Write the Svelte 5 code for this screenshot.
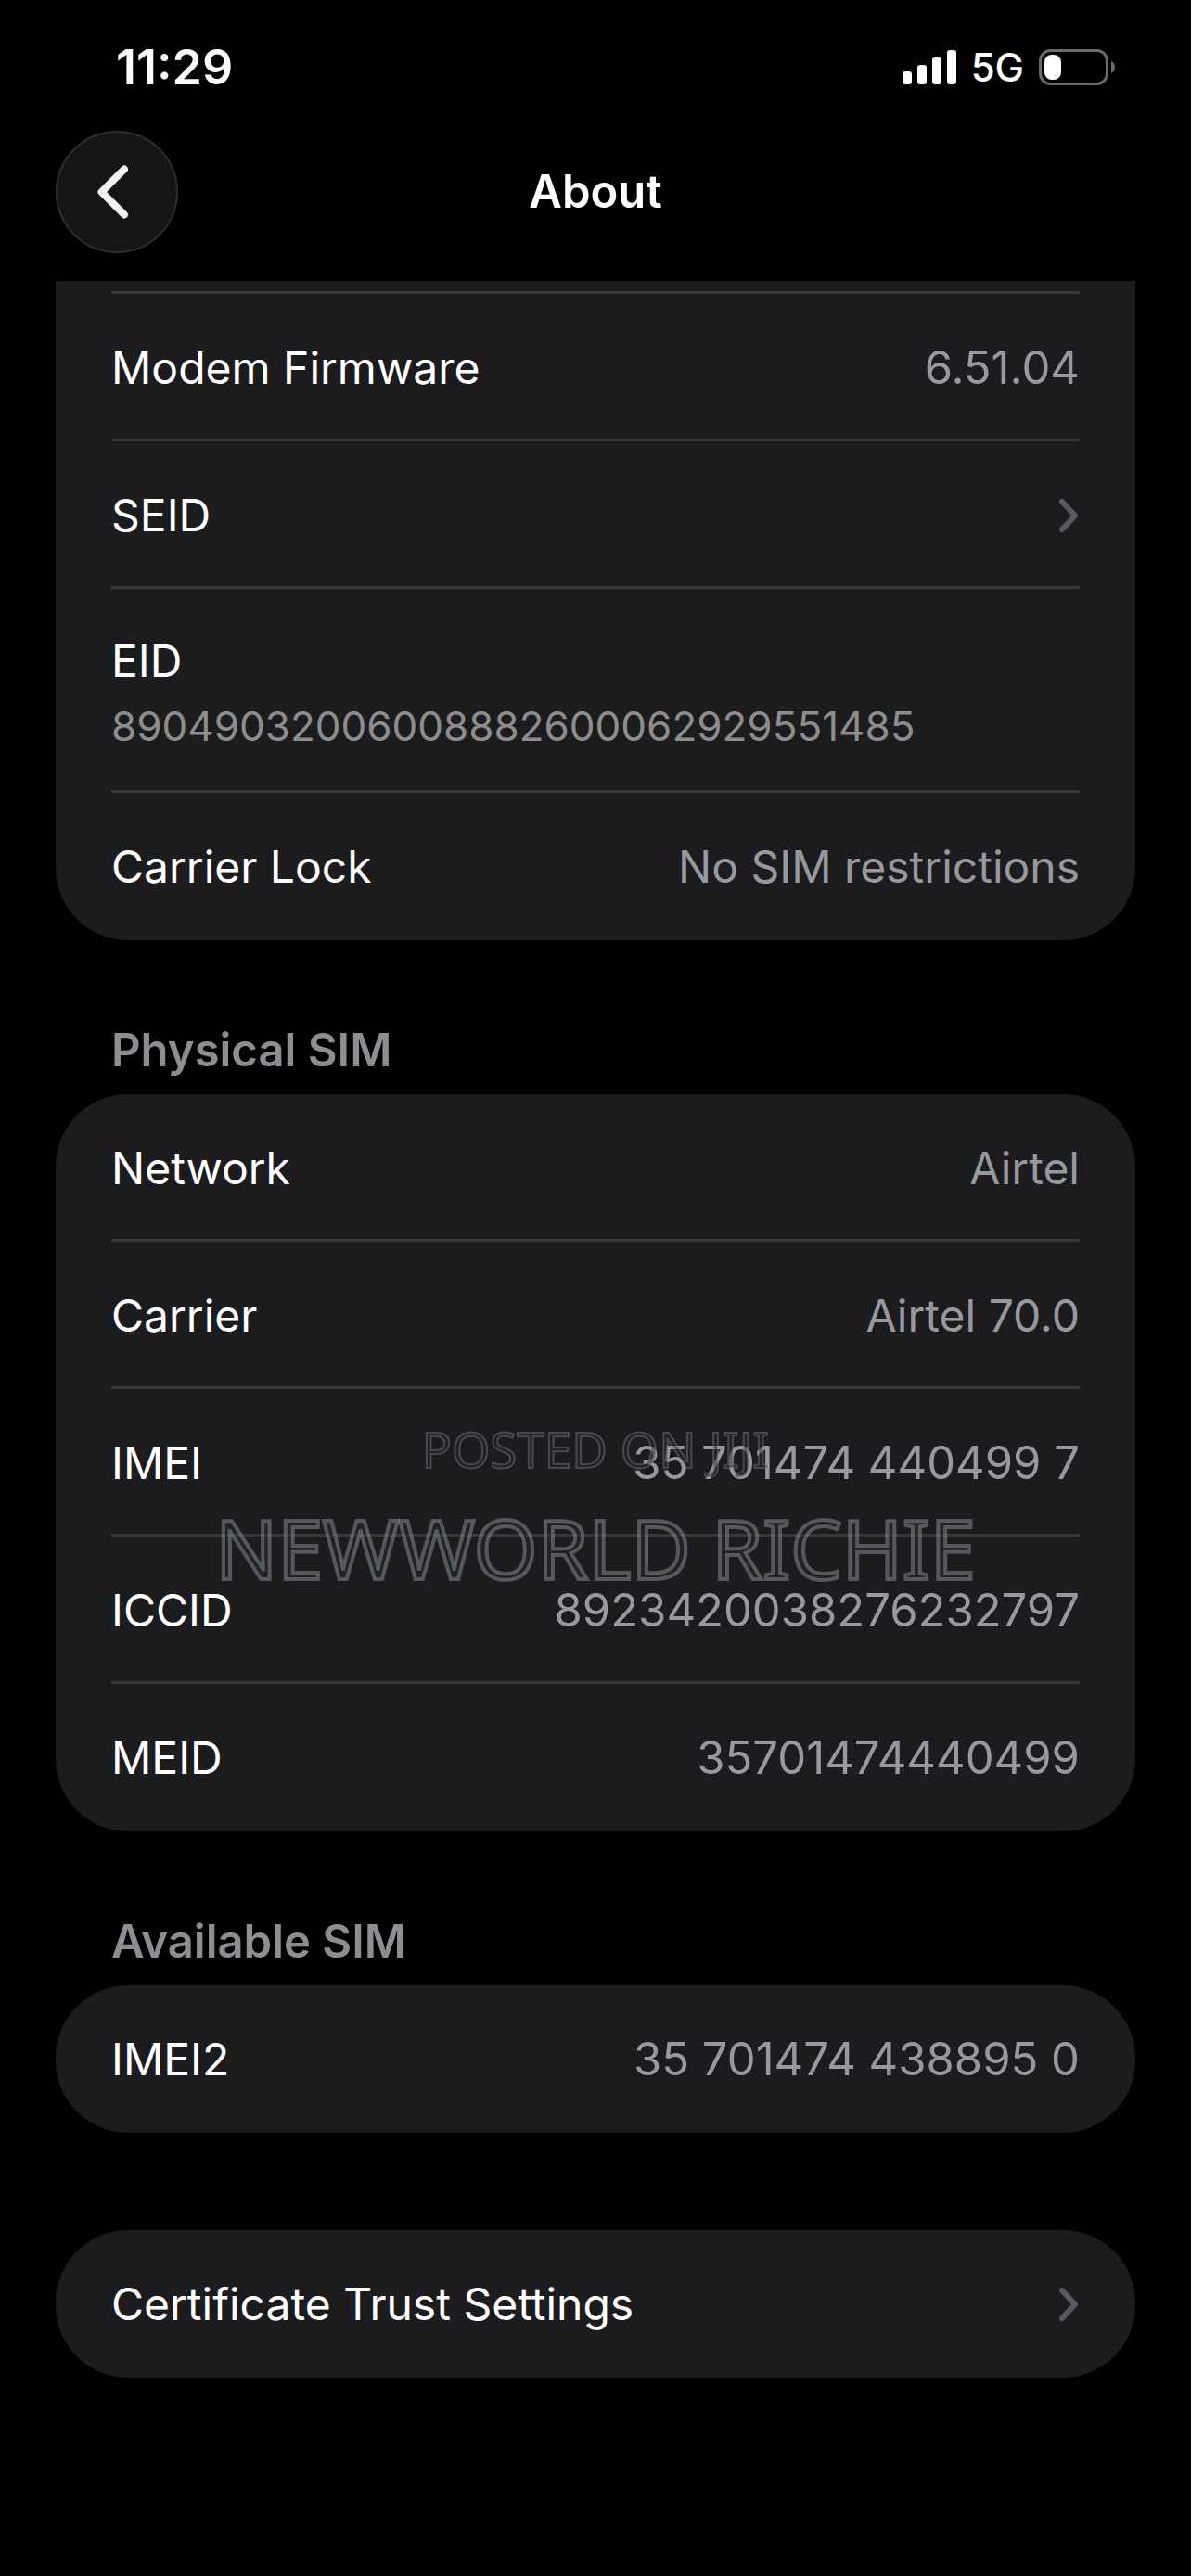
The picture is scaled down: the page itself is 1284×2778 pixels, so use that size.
<script>
  const deviceRows = [
    { label: "Modem Firmware", value: "6.51.04" },
    { label: "SEID", link: true },
    { label: "EID", value: "89049032006008882600062929551485", stacked: true },
    { label: "Carrier Lock", value: "No SIM restrictions" }
  ];

  const physicalRows = [
    { label: "Network", value: "Airtel" },
    { label: "Carrier", value: "Airtel 70.0" },
    { label: "IMEI", value: "35 701474 440499 7" },
    { label: "ICCID", value: "8923420038276232797" },
    { label: "MEID", value: "35701474440499" }
  ];

  const availableRows = [{ label: "IMEI2", value: "35 701474 438895 0" }];
  const trustRows = [{ label: "Certificate Trust Settings", link: true }];

  function isNumeric(value) {
    return /^[\d. ]+$/.test(value);
  }
</script>

{#snippet rowList(rows)}
  {#each rows as row}
    {#if row.link}
      <button class="row" type="button">
        <span class="label">{row.label}</span>
        <svg class="chevron" width="23" height="38" viewBox="0 0 23 38" aria-hidden="true">
          <path d="M4 4 L18 19 L4 34" />
        </svg>
      </button>
    {:else}
      <div class="row" class:stacked={row.stacked}>
        <span class="label">{row.label}</span>
        <span class="value" class:numeric={isNumeric(row.value)}>{row.value}</span>
      </div>
    {/if}
  {/each}
{/snippet}

<div class="screen">
  <div class="status">
    <span class="time">11:29</span>
    <div class="indicators">
      <svg class="signal" width="58" height="38" viewBox="0 0 58 38" aria-hidden="true">
        <rect x="0" y="23" width="10" height="14" rx="3" />
        <rect x="16" y="16" width="10" height="21" rx="3" />
        <rect x="32" y="8" width="10" height="29" rx="3" />
        <rect x="48" y="0" width="10" height="37" rx="3" />
      </svg>
      <span class="network">5G</span>
      <svg class="battery" width="82" height="40" viewBox="0 0 82 40" aria-hidden="true">
        <rect class="shell" x="1.5" y="1.5" width="72" height="36" rx="11" />
        <rect class="charge" x="6" y="6" width="18" height="27" rx="8" />
        <path class="nub" d="M78 13 Q82 15 82 19.5 Q82 24 78 26 Z" />
      </svg>
    </div>
  </div>

  <header>
    <button class="back" type="button" aria-label="Back">
      <svg width="36" height="60" viewBox="0 0 36 60" aria-hidden="true">
        <path d="M30 5.5 L5.5 30 L30 54.5" />
      </svg>
    </button>
    <h1>About</h1>
  </header>

  <main>
    <section class="card continued">
      <div class="sliver"></div>
      {@render rowList(deviceRows)}
    </section>

    <h2>Physical SIM</h2>
    <section class="card">
      {@render rowList(physicalRows)}
      <div class="watermark">
        <span class="posted">POSTED ON JIJI</span>
        <span class="seller">NEWWORLD RICHIE</span>
      </div>
    </section>

    <h2>Available SIM</h2>
    <section class="card">
      {@render rowList(availableRows)}
    </section>

    <section class="card spaced">
      {@render rowList(trustRows)}
    </section>
  </main>
</div>

<style>
  :global(body) {
    background: #000;
  }

  .screen {
    --line: #38383a;
    min-height: 100vh;
    box-sizing: border-box;
    padding-bottom: 120px;
    background: #000;
    color: #fff;
    font-family: Inter, "Liberation Sans", sans-serif;
    font-size: 48px;
    line-height: 60px;
  }

  button {
    margin: 0;
    border: 0;
    background: none;
    color: inherit;
    font: inherit;
    text-align: left;
  }

  path {
    fill: none;
    stroke-linecap: round;
    stroke-linejoin: round;
  }

  .status {
    display: flex;
    align-items: center;
    justify-content: space-between;
    box-sizing: border-box;
    height: 141px;
    padding: 5px 82px 0 125px;
  }

  .time {
    font-size: 52px;
    font-weight: 600;
  }

  .indicators {
    display: flex;
    align-items: center;
  }

  .signal {
    margin-right: 16px;
    fill: #fff;
  }

  .network {
    margin-right: 16px;
    font-size: 42px;
    font-weight: 500;
  }

  .shell {
    fill: none;
    stroke: #6b6b6b;
    stroke-width: 3;
  }

  .charge {
    fill: #fff;
  }

  .nub {
    fill: #6b6b6b;
  }

  header {
    display: grid;
    grid-template-columns: 132px 1fr 132px;
    align-items: center;
    padding: 0 60px 30px;
  }

  .back {
    display: flex;
    align-items: center;
    justify-content: center;
    box-sizing: border-box;
    height: 132px;
    padding: 0 8px 0 0;
    border: 2px solid #2e2e2e;
    border-radius: 50%;
    background: #151515;
  }

  .back path {
    stroke: #f2f2f2;
    stroke-width: 8;
  }

  h1,
  h2 {
    margin: 0;
    font-size: 49px;
    font-weight: 600;
    line-height: 62px;
  }

  h1 {
    text-align: center;
  }

  main {
    padding: 0 60px;
  }

  h2 {
    margin: 88px 60px 16px;
    color: #8d8d92;
  }

  .card {
    position: relative;
    padding: 0 60px;
    border-radius: 78px;
    background: #1c1c1e;
  }

  /* runs on from under the header, so its top edge is cut straight */
  .continued {
    border-radius: 0 0 78px 78px;
  }

  .spaced {
    margin-top: 105px;
  }

  .sliver {
    height: 14px;
    box-shadow: inset 0 -3px var(--line);
  }

  .row {
    display: flex;
    align-items: center;
    justify-content: space-between;
    width: 100%;
    min-height: 159px;
    padding: 0;
    box-shadow: inset 0 -3px var(--line);
  }

  .card > .row:last-child,
  .card > .row:has(+ .watermark) {
    box-shadow: none;
  }

  .value {
    color: #98989f;
  }

  .numeric {
    font-size: 49px;
  }

  .stacked {
    flex-direction: column;
    align-items: flex-start;
    justify-content: center;
    gap: 12px;
    box-sizing: border-box;
    min-height: 220px;
    padding-top: 4px;
  }

  .stacked .value {
    color: #8d8d8d;
    font-size: 44px;
    line-height: 56px;
  }

  .chevron path {
    stroke: #5a5a5e;
    stroke-width: 6;
  }

  .watermark {
    position: absolute;
    top: 345px;
    left: 0;
    right: 0;
    display: flex;
    flex-direction: column;
    align-items: center;
    gap: 8px;
    font-family: "Noto Sans", sans-serif;
    white-space: nowrap;
    pointer-events: none;
  }

  .posted,
  .seller {
    color: rgba(34, 42, 52, 0.5);
    -webkit-text-stroke: 2px rgba(150, 150, 152, 0.36);
  }

  .posted {
    font-size: 53px;
    line-height: 76px;
  }

  .seller {
    font-size: 88px;
    line-height: 120px;
    -webkit-text-stroke: 4px rgba(150, 150, 152, 0.48);
  }
</style>
